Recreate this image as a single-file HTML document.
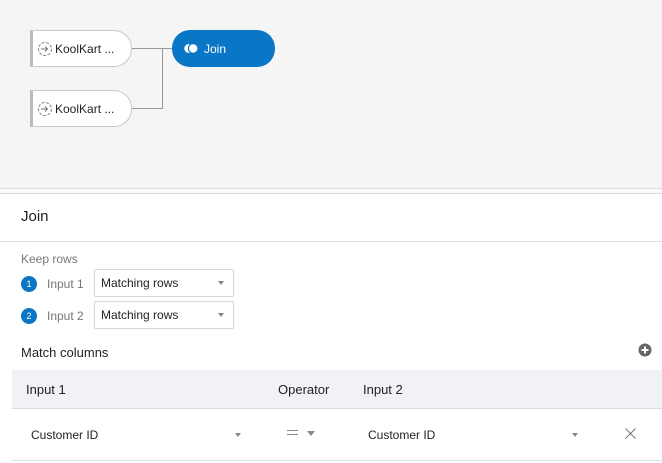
<!DOCTYPE html>
<html><head><meta charset="utf-8"><style>
*{box-sizing:border-box;margin:0;padding:0}
body{width:662px;height:463px;overflow:hidden;background:#fff;font-family:"Liberation Sans",sans-serif;position:relative;color:#333}
.canvas{position:absolute;left:0;top:0;width:662px;height:189px;background:#f5f5f5;border-bottom:1px solid #ddd}
.gap{position:absolute;left:0;top:189px;width:662px;height:5px;background:#fafafa;border-bottom:1px solid #dcdcdc}
.node{position:absolute;width:102px;height:37px;background:#fff;border:1px solid #c8c8c8;border-left:3px solid #bbb;border-radius:0 18px 18px 0;font-size:12px;line-height:36px;padding-left:22px;color:#222}
.node svg{position:absolute;left:4px;top:10px}
.join{position:absolute;left:172px;top:30px;width:103px;height:37px;background:#0a77c6;border-radius:18px;color:#fff;font-size:12px;line-height:38px;padding-left:32px}
.join svg{position:absolute;left:12px;top:13px}
.t{position:absolute;white-space:nowrap}
.sel{position:absolute;left:94px;width:140px;height:28px;border:1px solid #d6d6d6;border-radius:2px;font-size:12px;line-height:27px;padding-left:6px;color:#222}
.arr{position:absolute;width:0;height:0;border-left:3.5px solid transparent;border-right:3.5px solid transparent;border-top:4px solid #888}
.badge{position:absolute;left:21px;width:16px;height:16px;border-radius:8px;background:#0a77c6;color:#fff;font-size:9px;line-height:16px;text-align:center}
</style></head><body>
<div class="canvas"></div>
<div class="gap"></div>
<svg style="position:absolute;left:0;top:0" width="300" height="140"><path d="M132 48.5H172M162.5 48.5V108.5H132" stroke="#999" fill="none"/></svg>
<div class="node" style="left:30px;top:30px"><svg width="16" height="16" viewBox="0 0 16 16"><circle cx="8" cy="8" r="6.5" fill="none" stroke="#888" stroke-dasharray="3 1.5"/><path d="M4 8h6M8 5.5L10.5 8 8 10.5" stroke="#777" fill="none"/></svg>KoolKart ...</div>
<div class="node" style="left:30px;top:90px"><svg width="16" height="16" viewBox="0 0 16 16"><circle cx="8" cy="8" r="6.5" fill="none" stroke="#888" stroke-dasharray="3 1.5"/><path d="M4 8h6M8 5.5L10.5 8 8 10.5" stroke="#777" fill="none"/></svg>KoolKart ...</div>
<div class="join"><svg width="14" height="11" viewBox="0 0 14 11"><circle cx="4.8" cy="5.5" r="4.5" fill="#fff"/><circle cx="9.2" cy="5.5" r="4.8" fill="#fff" stroke="#0a77c6" stroke-width="1.2"/></svg>Join</div>
<div class="t" style="left:21px;top:208px;font-size:15px;color:#222">Join</div>
<div style="position:absolute;left:0;top:241px;width:662px;height:1px;background:#dcdcdc"></div>
<div class="t" style="left:21px;top:252px;font-size:12px;color:#777">Keep rows</div>
<div class="badge" style="top:276px">1</div>
<div class="t" style="left:47px;top:277px;font-size:12px;color:#777">Input 1</div>
<div class="sel" style="top:269px">Matching rows<div class="arr" style="left:123px;top:11px"></div></div>
<div class="badge" style="top:308px">2</div>
<div class="t" style="left:47px;top:309px;font-size:12px;color:#777">Input 2</div>
<div class="sel" style="top:301px">Matching rows<div class="arr" style="left:123px;top:11px"></div></div>
<div class="t" style="left:21px;top:345px;font-size:13px;color:#222">Match columns</div>
<svg style="position:absolute;left:638px;top:343px" width="14" height="14"><circle cx="7" cy="7" r="6.5" fill="#666"/><path d="M7 3.5v7M3.5 7h7" stroke="#fff" stroke-width="2"/></svg>
<div style="position:absolute;left:12px;top:370px;width:650px;height:39px;background:#f1f2f5;border-bottom:1px solid #dcdcdc"></div>
<div class="t" style="left:26px;top:382px;font-size:13px;color:#222">Input 1</div>
<div class="t" style="left:278px;top:382px;font-size:13px;color:#222">Operator</div>
<div class="t" style="left:363px;top:382px;font-size:13px;color:#222">Input 2</div>
<div class="t" style="left:31px;top:428px;font-size:12px;color:#222">Customer ID</div>
<div class="arr" style="left:235px;top:433px;border-width:4px 3px 0 3px"></div>
<div style="position:absolute;left:287px;top:430px;width:11px;height:5px;border-top:1px solid #888;border-bottom:1px solid #888"></div>
<div class="arr" style="left:307px;top:431px;border-width:5px 4px 0 4px"></div>
<div class="t" style="left:368px;top:428px;font-size:12px;color:#222">Customer ID</div>
<div class="arr" style="left:572px;top:433px;border-width:4px 3px 0 3px"></div>
<svg style="position:absolute;left:625px;top:428px" width="11" height="11"><path d="M.5.5l10 10M10.5.5l-10 10" stroke="#777"/></svg>
<div style="position:absolute;left:12px;top:460px;width:650px;height:1px;background:#dcdcdc"></div>
</body></html>
